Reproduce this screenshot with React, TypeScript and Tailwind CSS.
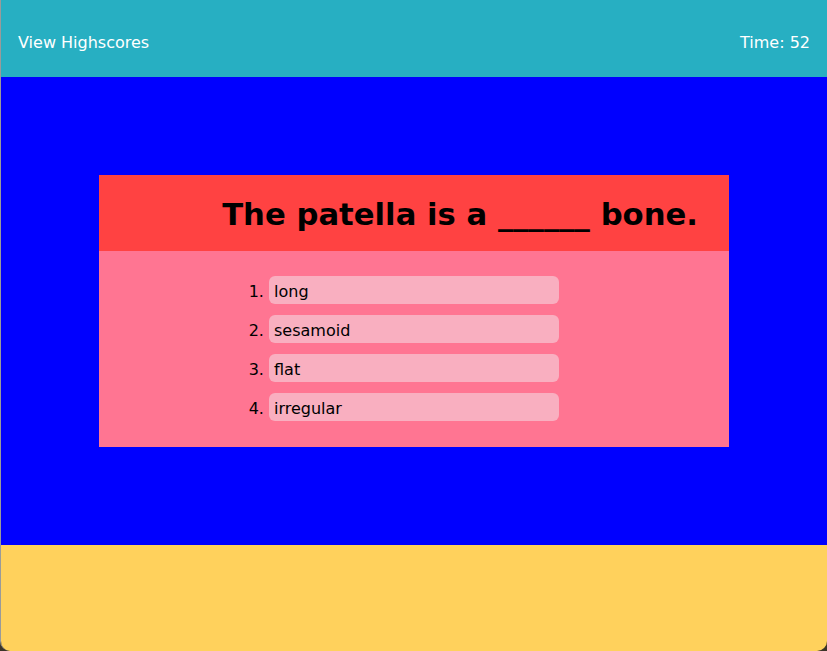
const answers = ["long", "sesamoid", "flat", "irregular"];

export default function App() {
  return (
    <div className="h-[651px] w-[827px] bg-[#3b3428]" style={{ fontFamily: '"DejaVu Sans", Verdana, sans-serif' }}>
      <div className="flex h-full flex-col overflow-hidden rounded-b-[10px] border-l border-[#9a9a9a]">
        <header className="flex h-[77px] shrink-0 items-center justify-between bg-[#27afc2] pl-[17px] pr-[17px] pt-[8px] text-[16px] text-white">
          <span>View Highscores</span>
          <span>Time: 52</span>
        </header>

        <main className="flex h-[468px] shrink-0 justify-center bg-[#0000ff] pt-[98px]">
          <div className="flex h-[272px] w-[630px] flex-col">
            <div className="flex h-[76px] items-center justify-end bg-[#ff4242] pr-[31px] pt-[4px]">
              <h1 className="text-[30.7px] font-bold text-black">The patella is a ______ bone.</h1>
            </div>
            <div className="flex flex-1 justify-center bg-[#ff7592] pt-[25px]">
              <ol className="flex w-[290px] list-decimal flex-col gap-[11px] text-[16px] text-black">
                {answers.map((a) => (
                  <li key={a} className="marker:text-black">
                    <div className="flex h-[28px] items-center rounded-[6px] bg-[#f9afc0] px-[5px] pt-[3px]">{a}</div>
                  </li>
                ))}
              </ol>
            </div>
          </div>
        </main>

        <footer className="flex-1 bg-[#ffd15c]" />
      </div>
    </div>
  );
}
